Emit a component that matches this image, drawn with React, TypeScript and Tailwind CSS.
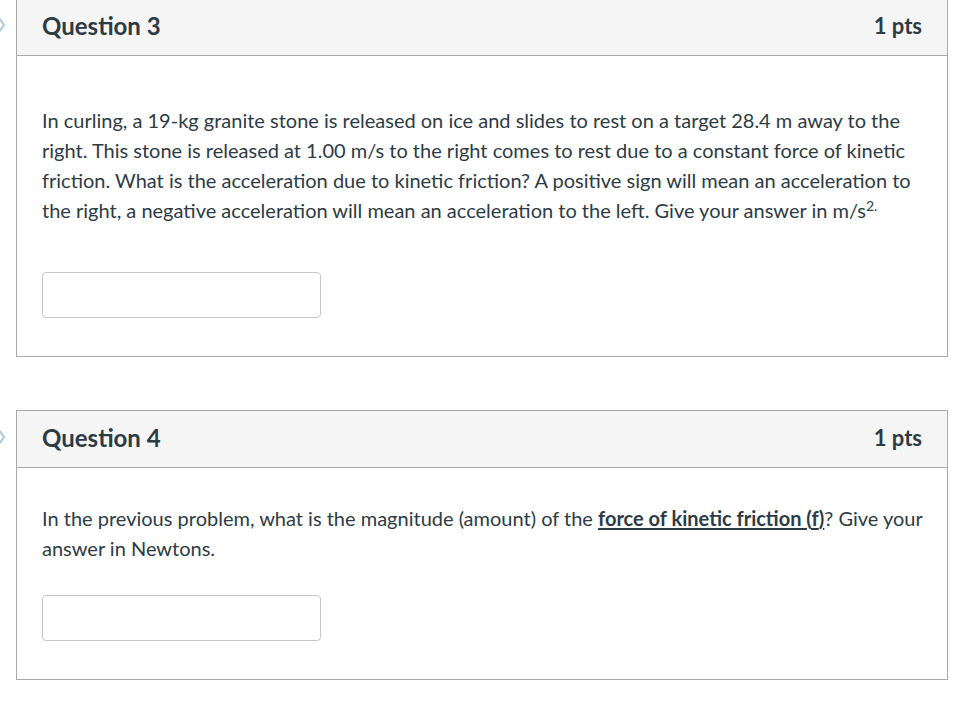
import React from 'react';

const Flag: React.FC = () => (
  <svg width="14" height="16" viewBox="0 0 14 16" className="absolute -left-[25px] top-[19px]">
    <path d="M1 1 H8 L13 8 L8 15 H1 Z" fill="none" stroke="#a9c8e0" strokeWidth="2" />
  </svg>
);

const AnswerBox: React.FC = () => (
  <input
    type="text"
    className="block w-[279px] h-[46px] border border-[#c7c7c7] rounded-[4px] bg-white outline-none"
  />
);

const Header: React.FC<{ title: string }> = ({ title }) => (
  <div className="flex items-center justify-between h-[57px] pl-[25px] pr-[25px] pb-[3px] bg-[#f5f5f5] border-b border-[#a9a9a9]">
    <h2 className="text-[24px] font-bold text-[#2d3b45]">{title}</h2>
    <span className="text-[22px] font-bold text-[#2d3b45]">1 pts</span>
  </div>
);

const App: React.FC = () => {
  return (
    <div
      className="min-h-screen bg-white text-[#2d3b45] -mt-[2px]"
      style={{ fontFamily: 'Lato, "Open Sans", sans-serif' }}
    >
      <div className="relative ml-[16px] w-[932px]">
        <Flag />
        <div className="border border-[#a9a9a9]">
          <Header title="Question 3" />
          <div className="pl-[25px] pr-[20px] pt-[49px] pb-[38px]">
            <p className="text-[20px] leading-[30px]">
              In curling, a 19-kg granite stone is released on ice and slides to rest on a target 28.4 m away to
              the right. This stone is released at 1.00 m/s to the right comes to rest due to a constant force of
              kinetic friction. What is the acceleration due to kinetic friction? A positive sign will mean an
              acceleration to the right, a negative acceleration will mean an acceleration to the left. Give your
              answer in m/s<sup className="text-[14px]">2.</sup>
            </p>
            <div className="mt-[47px]">
              <AnswerBox />
            </div>
          </div>
        </div>
      </div>

      <div className="relative ml-[16px] w-[932px] mt-[53px]">
        <Flag />
        <div className="border border-[#a9a9a9]">
          <Header title="Question 4" />
          <div className="pl-[25px] pr-[20px] pt-[35px] pb-[38px]">
            <p className="text-[20px] leading-[30px]">
              In the previous problem, what is the magnitude (amount) of the{' '}
              <a className="font-bold underline underline-offset-2">
                force of kinetic friction (<span className="underline decoration-dotted">f</span>)
              </a>
              ? Give your answer in Newtons.
            </p>
            <div className="mt-[32px]">
              <AnswerBox />
            </div>
          </div>
        </div>
      </div>
    </div>
  );
};

export default App;
